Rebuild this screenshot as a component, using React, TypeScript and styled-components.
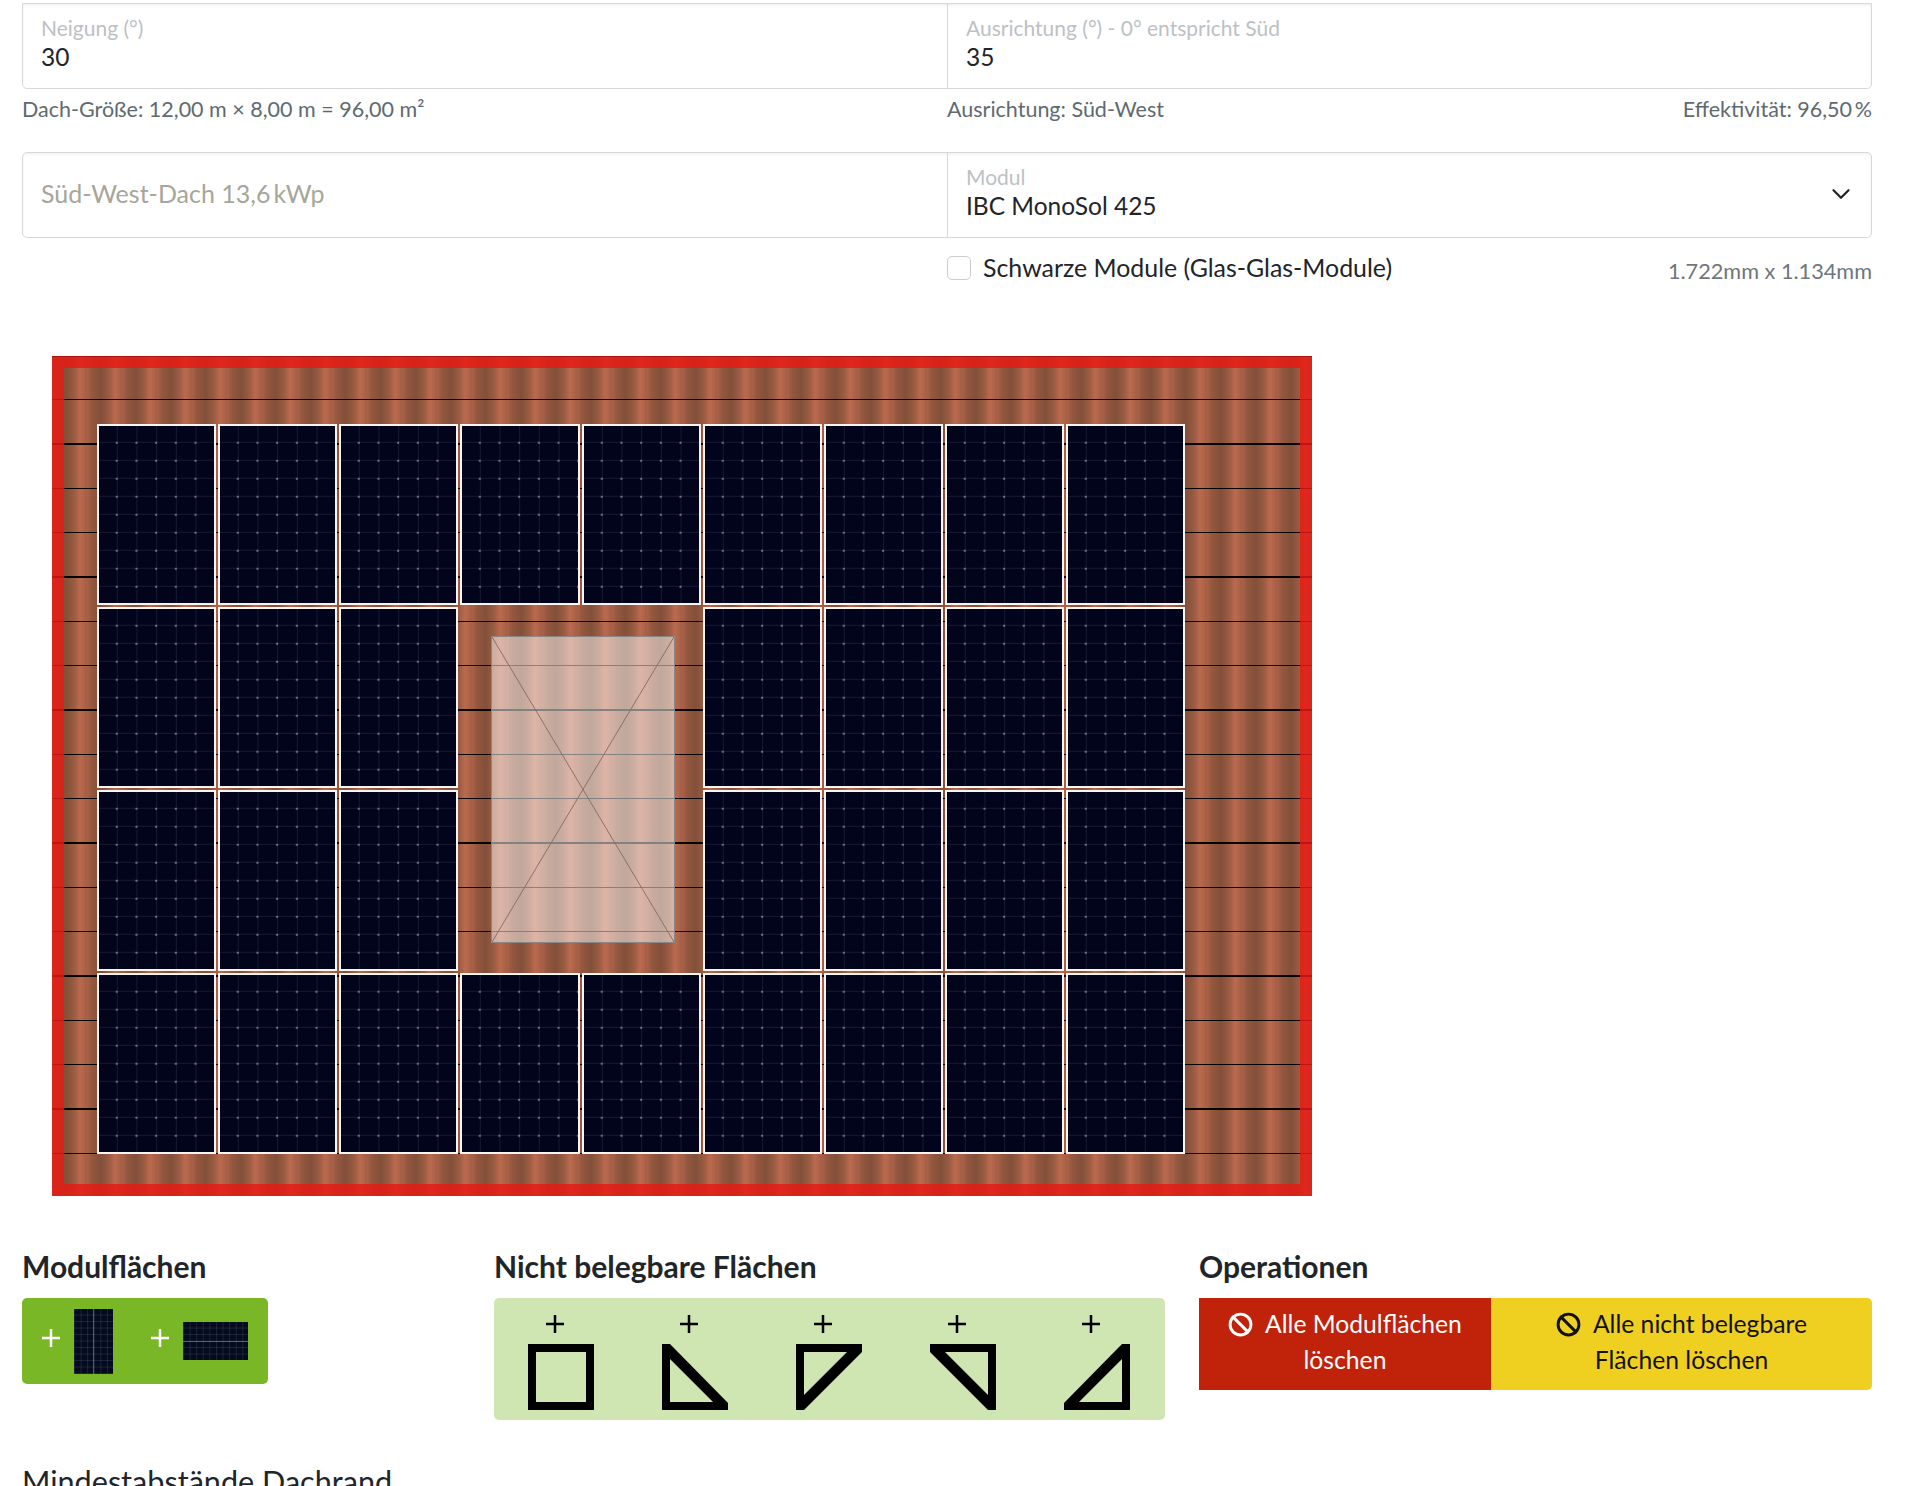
import React from "react";
import styled, { createGlobalStyle } from "styled-components";
import { Ban, ChevronDown } from "lucide-react";

const GlobalStyle = createGlobalStyle`
  html, body { margin: 0; padding: 0; background: #fff; }
  body { font-family: Lato, "Noto Sans", sans-serif; color: #212529; }
`;

const Page = styled.div`
  width: 1850px;
  height: 1486px;
  margin-left: 22px;
  padding-top: 3px;
  box-sizing: border-box;
  overflow: hidden;
`;

const InputGroup = styled.div<{ $flatTop?: boolean }>`
  display: grid;
  grid-template-columns: 924px 1fr;
  height: 86px;
  border: 1px solid #d6d9db;
  border-radius: ${(p) => (p.$flatTop ? "0 0 5px 5px" : "5px")};
  box-sizing: border-box;
  box-shadow: inset 0 2px 3px rgba(0, 0, 0, 0.05);
`;

const InputCell = styled.div`
  position: relative;
  display: flex;
  flex-direction: column;
  justify-content: center;
  padding: 0 18px 7px;
  & + & { border-left: 1px solid #d6d9db; }
`;

const FloatLabel = styled.div`
  font-size: 21px;
  line-height: 28px;
  color: #bcc1c4;
`;

const InputValue = styled.div`
  font-size: 24.5px;
  line-height: 30px;
  color: #212529;
`;

const Placeholder = styled.div`
  font-size: 25px;
  margin-top: 2px;
  color: #a6a699;
`;

const Chevron = styled(ChevronDown)`
  position: absolute;
  right: 15px;
  top: 26px;
  width: 30px;
  height: 30px;
  color: #212529;
`;

const InfoRow = styled.div`
  display: grid;
  grid-template-columns: 925px 1fr auto;
  height: 63px;
  padding-top: 6px;
  box-sizing: border-box;
  font-size: 21.5px;
  line-height: 28px;
  color: #5e6a70;
`;

const CheckRow = styled.div`
  display: grid;
  grid-template-columns: 925px 1fr auto;
  padding-top: 18px;
  height: 118px;
  box-sizing: border-box;
`;

const CheckLabel = styled.label`
  display: flex;
  align-items: center;
  gap: 12px;
  height: 24px;
  font-size: 24.9px;
  line-height: 24px;
  color: #212529;
`;

const CheckText = styled.span`
  margin-top: -2px;
`;

const CheckBox = styled.span`
  display: block;
  width: 24px;
  height: 24px;
  border: 1px solid #c9cdd0;
  border-radius: 5px;
  box-sizing: border-box;
`;

const ModuleSize = styled.div`
  font-size: 21.7px;
  line-height: 28px;
  color: #6d777c;
  margin-top: 1px;
`;

const Roof = styled.div`
  position: relative;
  width: 1260px;
  height: 840px;
  margin-left: 30px;
  background-color: #a05c42;
  background-image:
    repeating-linear-gradient(
      180deg,
      transparent 0,
      transparent 43.1px,
      #070302 43.1px,
      #070302 44.33px
    ),
    repeating-linear-gradient(
      90deg,
      #a9634a 0,
      #94573f 5px,
      #82503a 14px,
      #9a5b42 22px,
      #bb6a4e 28px,
      #b2664b 31px,
      #a25e45 35px
    );
`;

const RoofEdge = styled.div`
  position: absolute;
  inset: 0;
  box-shadow:
    inset 0 1px 0 rgba(150, 12, 10, 0.7),
    inset 0 0 0 12px rgba(232, 24, 18, 0.82);
`;

const ModuleGrid = styled.div`
  position: absolute;
  left: 45px;
  top: 68px;
  display: grid;
  grid-template-columns: repeat(9, 119.15px);
  grid-auto-rows: 180.9px;
  gap: 2px;
`;

const SolarModule = styled.div<{ $empty?: boolean }>`
  box-sizing: border-box;
  ${(p) =>
    p.$empty
      ? "visibility: hidden;"
      : `
  border: 2px solid #f8f4f2;
  background-color: #01041a;
  background-image:
    radial-gradient(circle, rgba(255,255,255,.45) 0, rgba(255,255,255,.35) 1px, transparent 1.6px),
    linear-gradient(90deg, rgba(140,150,190,.15) 1px, transparent 1px),
    linear-gradient(0deg, rgba(140,150,190,.15) 1px, transparent 1px);
  background-size: 19.7px 18px;
  background-position: 7.9px 7.8px, 17.8px 0, 0 16.8px;
`}
`;

const Obstacle = styled.div`
  position: absolute;
  left: 439px;
  top: 280px;
  width: 184px;
  height: 307px;
  background: rgba(255, 255, 255, 0.5);
  border: 1px solid #8a8683;
  box-sizing: border-box;
`;

const ObstacleCross = styled.svg`
  display: block;
  width: 100%;
  height: 100%;
`;

const ToolRow = styled.div`
  display: grid;
  grid-template-columns: 472px 705px 1fr;
  height: 268px;
  padding-top: 52px;
  box-sizing: border-box;
`;

const ToolHeading = styled.h3`
  margin: 0 0 14px;
  font-size: 30px;
  line-height: 36px;
  font-weight: 700;
  color: #212529;
`;

const ModuleButtons = styled.div`
  display: flex;
  align-items: center;
  width: 246px;
  height: 86px;
  background: #79b726;
  border-radius: 5px;
`;

const ModuleButton = styled.button<{ $pad: number }>`
  display: flex;
  align-items: center;
  background: none;
  border: 0;
  padding: 0 0 0 ${(p) => p.$pad}px;
`;

const PlusMark = styled.svg`
  display: block;
  width: 20px;
  height: 20px;
  flex: none;
`;

const ModulePlus = styled(PlusMark)`
  margin-bottom: 6px;
`;

const MiniModule = styled.div<{ $w: number; $h: number; $split: string }>`
  width: ${(p) => p.$w}px;
  height: ${(p) => p.$h}px;
  margin-left: 13px;
  background-color: #050b1e;
  background-image:
    linear-gradient(
      ${(p) => p.$split},
      transparent calc(50% - 0.5px),
      rgba(170, 180, 205, 0.45) 0,
      rgba(170, 180, 205, 0.45) calc(50% + 0.5px),
      transparent 0
    ),
    linear-gradient(90deg, rgba(150, 160, 190, 0.16) 1px, transparent 1px),
    linear-gradient(0deg, rgba(150, 160, 190, 0.16) 1px, transparent 1px);
  background-size: 100% 100%, 6.6px 6.5px, 6.6px 6.5px;
`;

const ShapeButtons = styled.div`
  display: flex;
  width: 671px;
  height: 122px;
  background: #cfe6b3;
  border-radius: 5px;
`;

const ShapeButton = styled.button`
  display: flex;
  flex-direction: column;
  align-items: flex-start;
  justify-content: flex-start;
  width: 134px;
  padding: 16px 0 0 34px;
  background: none;
  border: 0;
`;

const ShapePlus = styled(PlusMark)`
  margin: 0 0 10px 17px;
`;

const ShapeIcon = styled.svg`
  display: block;
  width: 66px;
  height: 66px;
`;

const DangerGroup = styled.div`
  display: grid;
  grid-template-columns: 292px 1fr;
  height: 92px;
  border-radius: 0 5px 5px 0;
  overflow: hidden;
`;

const DangerButton = styled.button<{ $bg: string; $fg: string }>`
  display: block;
  padding: 0 12px 4px;
  background: ${(p) => p.$bg};
  color: ${(p) => p.$fg};
  border: 0;
  font-family: inherit;
  font-size: 24.7px;
  line-height: 36px;
  text-align: center;
`;

const BanIcon = styled(Ban)`
  width: 25px;
  height: 25px;
  margin-right: 12px;
  vertical-align: -4px;
`;

const NextHeading = styled.h3`
  margin: 0;
  font-size: 30.6px;
  line-height: 36px;
  font-weight: 400;
  color: #212529;
`;

const plusPath = "M10 1V19M1 10H19";

const shapes = [
  "M0 0H66V66H0ZM8 8V58H58V8Z",
  "M0 0H8L66 59V66H0ZM8 15V58H51Z",
  "M0 0H66V8L8 66H0ZM8 8V51L51 8Z",
  "M0 0H66V66H58L0 8ZM15 8L58 51V8Z",
  "M66 0H58L0 59V66H66ZM58 15V58H15Z",
];

// two empty cells in the middle rows, that is where the skylight sits
const modules = Array.from({ length: 36 }, (_, i) => {
  const row = Math.floor(i / 9);
  const col = i % 9;
  return (row === 1 || row === 2) && (col === 3 || col === 4);
});

function App() {
  return (
    <Page>
      <GlobalStyle />
      <InputGroup $flatTop>
        <InputCell>
          <FloatLabel>Neigung (°)</FloatLabel>
          <InputValue>30</InputValue>
        </InputCell>
        <InputCell>
          <FloatLabel>Ausrichtung (°) - 0° entspricht Süd</FloatLabel>
          <InputValue>35</InputValue>
        </InputCell>
      </InputGroup>
      <InfoRow>
        <div>Dach-Größe: 12,00 m × 8,00 m = 96,00 m²</div>
        <div>Ausrichtung: Süd-West</div>
        <div>Effektivität: 96,50{"\u2009"}%</div>
      </InfoRow>
      <InputGroup>
        <InputCell>
          <Placeholder>Süd-West-Dach 13,6{"\u2009"}kWp</Placeholder>
        </InputCell>
        <InputCell>
          <FloatLabel>Modul</FloatLabel>
          <InputValue>IBC MonoSol 425</InputValue>
          <Chevron strokeWidth={1.8} />
        </InputCell>
      </InputGroup>
      <CheckRow>
        <div />
        <CheckLabel>
          <CheckBox />
          <CheckText>Schwarze Module (Glas-Glas-Module)</CheckText>
        </CheckLabel>
        <ModuleSize>1.722mm x 1.134mm</ModuleSize>
      </CheckRow>
      <Roof>
        <ModuleGrid>
          {modules.map((empty, i) => (
            <SolarModule key={i} $empty={empty} />
          ))}
        </ModuleGrid>
        <Obstacle>
          <ObstacleCross viewBox="0 0 182 305" preserveAspectRatio="none">
            <path d="M0 0L182 305M182 0L0 305" stroke="#8a7068" strokeWidth="1" fill="none" />
          </ObstacleCross>
        </Obstacle>
        <RoofEdge />
      </Roof>
      <ToolRow>
        <div>
          <ToolHeading>Modulflächen</ToolHeading>
          <ModuleButtons>
            <ModuleButton $pad={19}>
              <ModulePlus viewBox="0 0 20 20">
                <path d={plusPath} stroke="#fff" strokeWidth="2.5" fill="none" />
              </ModulePlus>
              <MiniModule $w={39} $h={65} $split="90deg" />
            </ModuleButton>
            <ModuleButton $pad={37}>
              <ModulePlus viewBox="0 0 20 20">
                <path d={plusPath} stroke="#fff" strokeWidth="2.5" fill="none" />
              </ModulePlus>
              <MiniModule $w={65} $h={38} $split="0deg" />
            </ModuleButton>
          </ModuleButtons>
        </div>
        <div>
          <ToolHeading>Nicht belegbare Flächen</ToolHeading>
          <ShapeButtons>
            {shapes.map((d) => (
              <ShapeButton key={d}>
                <ShapePlus viewBox="0 0 20 20">
                  <path d={plusPath} stroke="#000" strokeWidth="2.5" fill="none" />
                </ShapePlus>
                <ShapeIcon viewBox="0 0 66 66">
                  <path d={d} fill="#000" fillRule="evenodd" />
                </ShapeIcon>
              </ShapeButton>
            ))}
          </ShapeButtons>
        </div>
        <div>
          <ToolHeading>Operationen</ToolHeading>
          <DangerGroup>
            <DangerButton $bg="#c1220a" $fg="#fff">
              <BanIcon strokeWidth={2.8} />
              Alle Modulflächen
              <br />
              löschen
            </DangerButton>
            <DangerButton $bg="#efcf20" $fg="#111">
              <BanIcon strokeWidth={2.8} />
              Alle nicht belegbare
              <br />
              Flächen löschen
            </DangerButton>
          </DangerGroup>
        </div>
      </ToolRow>
      <NextHeading>Mindestabstände Dachrand</NextHeading>
    </Page>
  );
}

export default App;
